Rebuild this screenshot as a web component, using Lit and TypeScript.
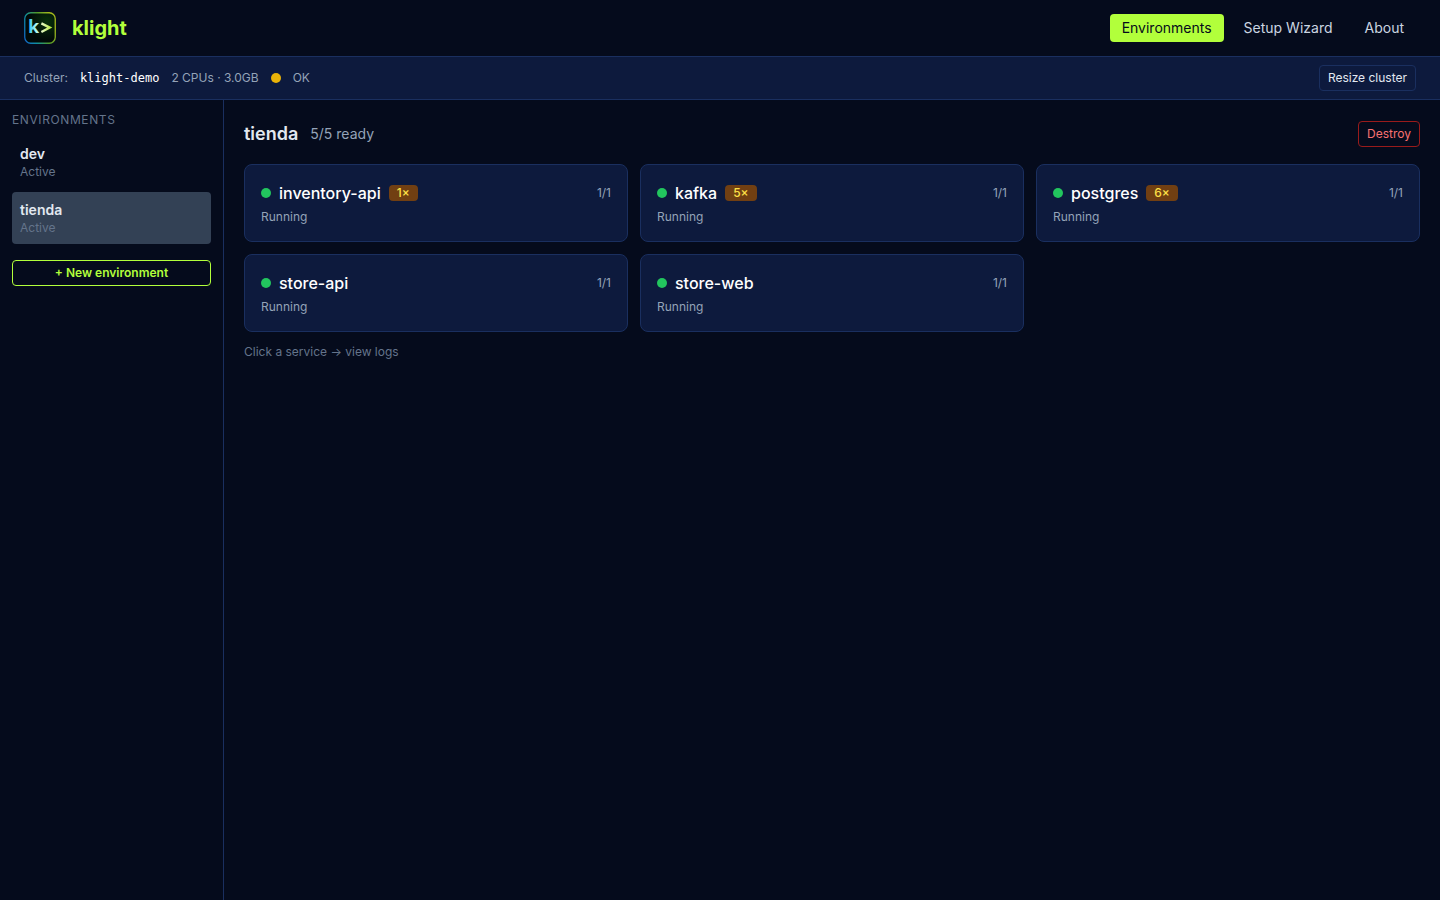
import { LitElement, html, css, nothing } from "lit";
import { customElement, property, state } from "lit/decorators.js";
import { classMap } from "lit/directives/class-map.js";

interface Service {
  name: string;
  restarts: number;
  ready: string;
  status: string;
}

@customElement("klight-logo")
class KlightLogo extends LitElement {
  static styles = css`
    :host { display: block; width: 32px; height: 32px; }
    svg { display: block; }
    .prompt { font: 700 18px "Noto Sans", sans-serif; }
  `;
  render() {
    return html`
      <svg width="32" height="32" viewBox="0 0 32 32" aria-hidden="true">
        <defs>
          <linearGradient id="edge" x1="0" y1="0.9" x2="1" y2="0.5">
            <stop offset="0" stop-color="#1268c8" />
            <stop offset="0.3" stop-color="#0f8fa0" />
            <stop offset="0.65" stop-color="#4f9a2c" />
            <stop offset="1" stop-color="#a3b81c" />
          </linearGradient>
          <radialGradient id="glow" cx="0.72" cy="0.3" r="0.6">
            <stop offset="0" stop-color="#06300a" />
            <stop offset="1" stop-color="#010a08" />
          </radialGradient>
          <linearGradient id="ink" gradientUnits="userSpaceOnUse" x1="5" y1="0" x2="27" y2="0">
            <stop offset="0" stop-color="#2cc4f8" />
            <stop offset="0.3" stop-color="#a4f6f4" />
            <stop offset="0.55" stop-color="#eafbd0" />
            <stop offset="1" stop-color="#b8ec44" />
          </linearGradient>
        </defs>
        <rect x="0.75" y="0.75" width="30.5" height="30.5" rx="6" fill="url(#glow)" stroke="url(#edge)" stroke-width="1.3" />
        <text class="prompt" x="4" y="21" fill="url(#ink)">k</text>
        <path d="M17.4 11.4 25.8 15.6 17.4 20" fill="none" stroke="url(#ink)" stroke-width="2.3" />
      </svg>
    `;
  }
}

@customElement("service-card")
class ServiceCard extends LitElement {
  @property({ attribute: false }) service!: Service;

  static styles = css`
    :host { display: block; }
    .card {
      display: flex;
      flex-direction: column;
      gap: 4px;
      width: 100%;
      box-sizing: border-box;
      padding: 16px;
      border: 1px solid #1a2f5f;
      border-radius: 8px;
      background: #0d1a3d;
      color: #94a3b8;
      font: 400 12px/16px Inter, sans-serif;
      text-align: left;
      cursor: pointer;
    }
    .top { display: flex; align-items: center; gap: 8px; }
    .dot { width: 10px; height: 10px; border-radius: 50%; background: #22c55e; }
    .name { color: #fff; font-size: 16px; line-height: 24px; font-weight: 500; }
    .restarts {
      padding: 0 8px;
      border-radius: 4px;
      background: #713f12;
      color: #fde047;
      font-weight: 500;
    }
    .ready { margin-left: auto; }
  `;
  render() {
    const s = this.service;
    return html`
      <button class="card" type="button">
        <span class="top">
          <span class="dot"></span>
          <span class="name">${s.name}</span>
          ${s.restarts ? html`<span class="restarts">${s.restarts}×</span>` : nothing}
          <span class="ready">${s.ready}</span>
        </span>
        <span>${s.status}</span>
      </button>
    `;
  }
}

@customElement("app-root")
class AppRoot extends LitElement {
  @state() private selected = "tienda";

  private pages = ["Environments", "Setup Wizard", "About"];
  private environments = [
    { name: "dev", status: "Active" },
    { name: "tienda", status: "Active" },
  ];
  private services: Service[] = [
    { name: "inventory-api", restarts: 1, ready: "1/1", status: "Running" },
    { name: "kafka", restarts: 5, ready: "1/1", status: "Running" },
    { name: "postgres", restarts: 6, ready: "1/1", status: "Running" },
    { name: "store-api", restarts: 0, ready: "1/1", status: "Running" },
    { name: "store-web", restarts: 0, ready: "1/1", status: "Running" },
  ];

  static styles = css`
    :host {
      display: flex;
      flex-direction: column;
      min-height: 100vh;
      background: #050b1c;
      color: #e2e8f0;
      font: 400 12px/16px Inter, sans-serif;
    }
    .header {
      display: flex;
      align-items: center;
      justify-content: space-between;
      padding: 12px 24px;
      border-bottom: 1px solid #1a2f5f;
    }
    .brand { display: flex; align-items: center; gap: 16px; }
    .wordmark { color: #b2ff3b; font-size: 20px; line-height: 28px; font-weight: 700; }
    .nav { display: flex; gap: 8px; }
    .link {
      padding: 4px 12px;
      border-radius: 4px;
      color: #cbd5e1;
      font-size: 14px;
      line-height: 20px;
      text-decoration: none;
    }
    .link.current { background: #b2ff3b; color: #050b1c; }
    .cluster {
      display: flex;
      align-items: center;
      gap: 12px;
      padding: 8px 24px;
      border-bottom: 1px solid #1a2f5f;
      background: #0d1a3d;
      color: #94a3b8;
    }
    .cluster-name { color: #fff; font-family: "DejaVu Sans Mono", monospace; }
    .dot { width: 10px; height: 10px; border-radius: 50%; background: #eab308; }
    .btn {
      padding: 4px 8px;
      border: 1px solid #1a2f5f;
      border-radius: 4px;
      background: transparent;
      color: #e2e8f0;
      font: inherit;
      cursor: pointer;
    }
    .resize { margin-left: auto; }
    .body { display: flex; flex: 1; }
    .sidebar {
      display: flex;
      flex-direction: column;
      flex: none;
      width: 224px;
      box-sizing: border-box;
      padding: 12px;
      border-right: 1px solid #1a2f5f;
    }
    .caption {
      margin: 0 0 8px;
      color: #64748b;
      font-size: 12px;
      line-height: 16px;
      font-weight: 400;
      letter-spacing: 0.05em;
      text-transform: uppercase;
    }
    .envs { display: flex; flex-direction: column; gap: 4px; margin-bottom: 16px; }
    .env {
      display: flex;
      flex-direction: column;
      padding: 8px;
      border: 0;
      border-radius: 4px;
      background: transparent;
      color: #64748b;
      font: inherit;
      text-align: left;
      cursor: pointer;
    }
    .env.active { background: #334155; }
    .env-name { color: #e2e8f0; font-size: 14px; line-height: 20px; font-weight: 600; }
    .create { border-color: #b2ff3b; color: #b2ff3b; font-weight: 600; }
    .main { flex: 1; min-width: 0; padding: 20px; }
    .heading { display: flex; align-items: center; gap: 12px; margin-bottom: 16px; }
    .title { margin: 0; font-size: 18px; line-height: 28px; font-weight: 600; }
    .summary { color: #94a3b8; font-size: 14px; line-height: 20px; }
    .destroy { margin-left: auto; border-color: #991b1b; color: #f87171; }
    .grid { display: grid; grid-template-columns: repeat(3, minmax(0, 1fr)); gap: 12px; }
    .hint { margin: 12px 0 0; color: #64748b; }
  `;

  render() {
    return html`
      <header class="header">
        <div class="brand">
          <klight-logo></klight-logo>
          <span class="wordmark">klight</span>
        </div>
        <nav class="nav">
          ${this.pages.map((p, i) => html`<a class=${classMap({ link: true, current: i === 0 })} href="#">${p}</a>`)}
        </nav>
      </header>
      <section class="cluster">
        <span>Cluster:</span>
        <span class="cluster-name">klight-demo</span>
        <span>2 CPUs · 3.0GB</span>
        <span class="dot"></span>
        <span>OK</span>
        <button class="btn resize" type="button">Resize cluster</button>
      </section>
      <div class="body">
        <aside class="sidebar">
          <h2 class="caption">Environments</h2>
          <div class="envs">
            ${this.environments.map(
              (e) => html`
                <button
                  type="button"
                  class=${classMap({ env: true, active: e.name === this.selected })}
                  @click=${() => (this.selected = e.name)}
                >
                  <span class="env-name">${e.name}</span>
                  <span>${e.status}</span>
                </button>
              `
            )}
          </div>
          <button class="btn create" type="button">+ New environment</button>
        </aside>
        <main class="main">
          <div class="heading">
            <h1 class="title">${this.selected}</h1>
            <span class="summary">5/5 ready</span>
            <button class="btn destroy" type="button">Destroy</button>
          </div>
          <div class="grid">
            ${this.services.map((s) => html`<service-card .service=${s}></service-card>`)}
          </div>
          <p class="hint">Click a service → view logs</p>
        </main>
      </div>
    `;
  }
}
